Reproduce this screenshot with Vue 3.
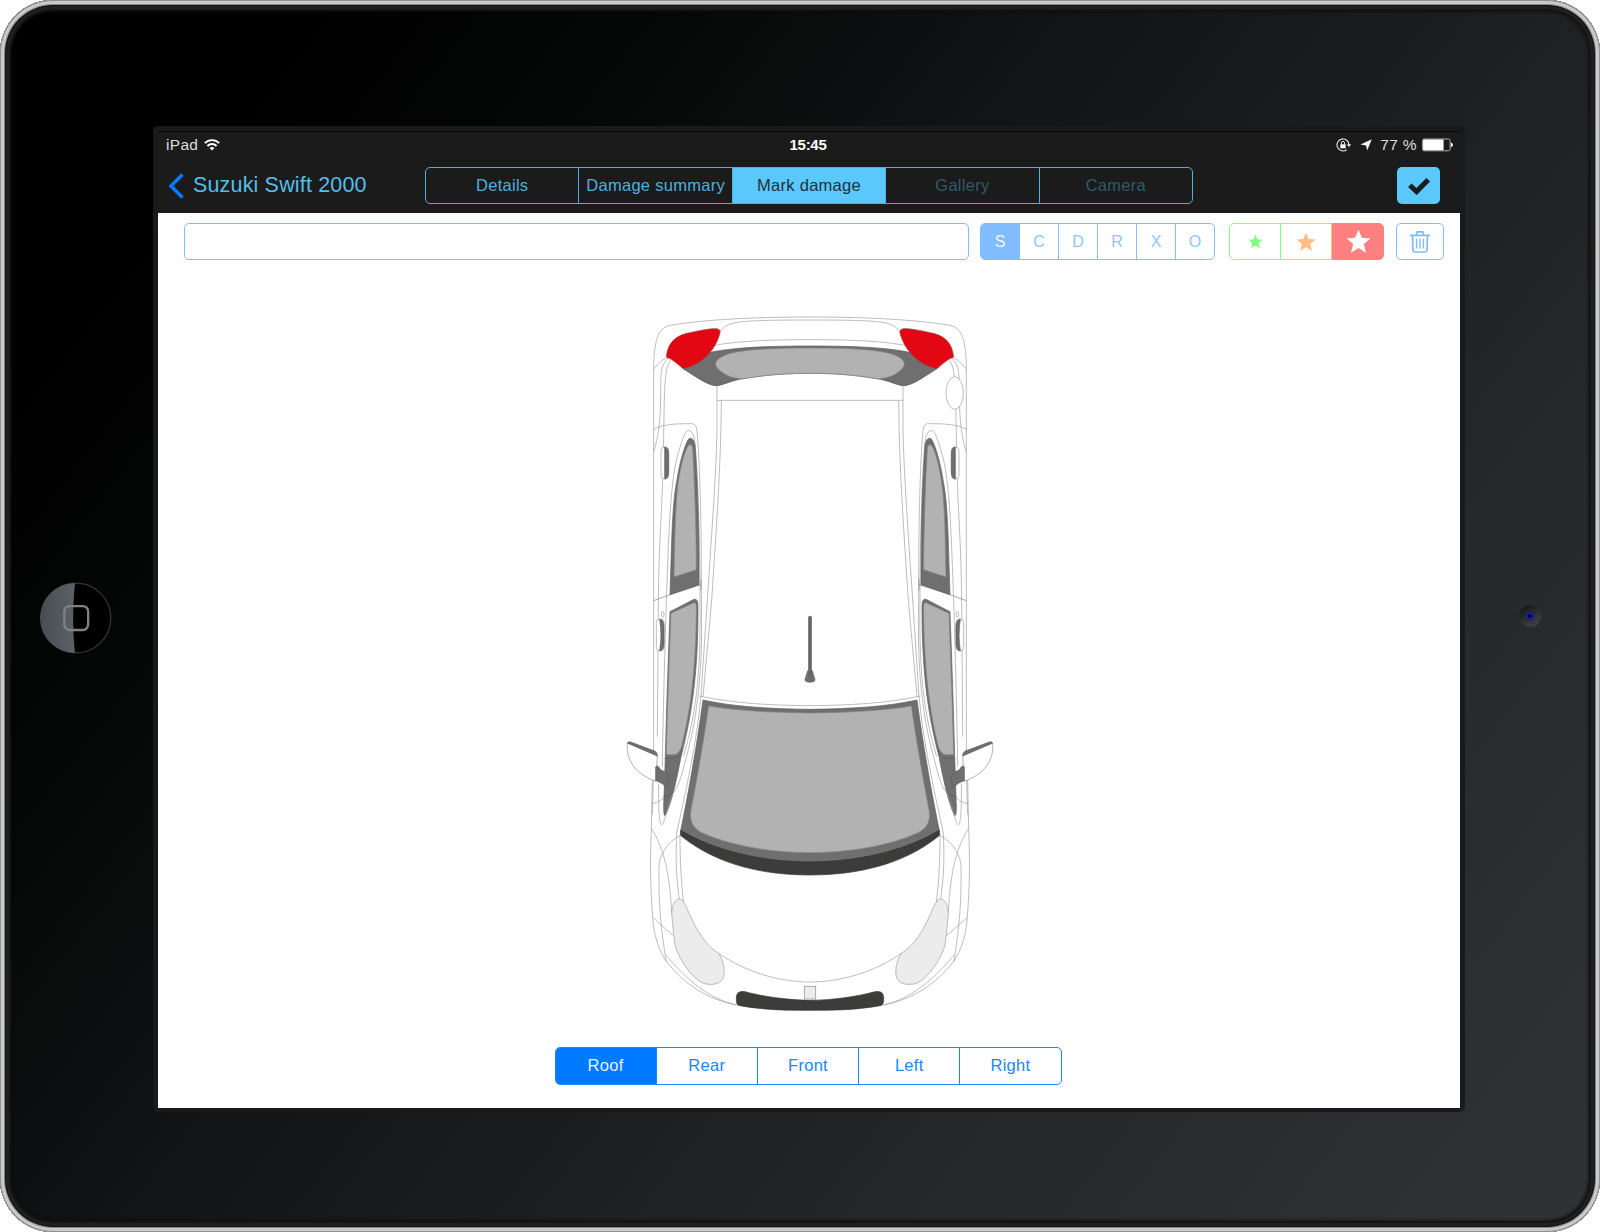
<script setup>
import { ref } from 'vue'

const tabs = [
  { name: 'Details' },
  { name: 'Damage summary' },
  { name: 'Mark damage' },
  { name: 'Gallery', disabled: true },
  { name: 'Camera', disabled: true },
]
const activeTab = ref('Mark damage')

const codes = ['S', 'C', 'D', 'R', 'X', 'O']
const activeCode = ref('S')

const severities = [
  { name: 'low', size: 15 },
  { name: 'medium', size: 20 },
  { name: 'high', size: 25 },
]
const activeSeverity = ref('high')

const views = ['Roof', 'Rear', 'Front', 'Left', 'Right']
const activeView = ref('Roof')

// The car is symmetrical: one half is drawn and then mirrored on x = 570.
const halves = ['', 'translate(1140 0) scale(-1 1)']
</script>

<template>
  <div class="device">
    <div class="bezel-left">
      <svg class="home" width="72" height="72" viewBox="0 0 74 74">
        <defs>
          <linearGradient id="shine" x1="0" y1="0" x2="1" y2="0">
            <stop offset="0" stop-color="#484d52" />
            <stop offset="1" stop-color="#5c6167" />
          </linearGradient>
        </defs>
        <circle cx="37" cy="37" r="35.8" fill="#000" stroke="#333335" stroke-width="1.4" />
        <path d="M36 1A36 36 0 0 0 36 73C33.500 50 33.500 25 36 1Z" fill="url(#shine)" />
        <rect x="25" y="24.800" width="24.500" height="24.500" rx="5.500" fill="none" stroke="#808086" stroke-width="2.400" />
      </svg>
    </div>

    <div class="frame">
      <div class="screen">
        <header class="top">
          <div class="status">
            <div class="status-left">
              <span class="carrier">iPad</span>
              <svg width="16" height="12" viewBox="0 0 16 12" fill="none" stroke="#fff" stroke-width="1.900">
                <path d="M.8 4.200C4.800 .1 11.200 .1 15.200 4.200" />
                <path d="M3.400 7C6 4.400 10 4.400 12.600 7" />
                <path d="M8 11.500L5.500 8.900C7 7.600 9 7.600 10.500 8.900Z" fill="#fff" stroke="none" />
              </svg>
            </div>
            <span class="time">15:45</span>
            <div class="status-right">
              <svg width="16" height="14" viewBox="0 0 16 14" fill="none" stroke="#e8e8e8">
                <path d="M13 7A6 6 0 1 0 10.800 11.600" stroke-width="1.100" />
                <path d="M10.800 6.300H15.200L13 9Z" fill="#e8e8e8" stroke="none" />
                <rect x="4.300" y="6.300" width="5.400" height="4" fill="#fff" stroke="none" />
                <path d="M5.400 6.500V5A1.600 1.600 0 0 1 8.600 5V6.500" stroke-width="1" />
              </svg>
              <svg class="arrow" width="12" height="12" viewBox="0 0 12 12">
                <path d="M11.800 .2L7.200 11.600L6 6.400L.4 5.600Z" fill="#f2f2f2" />
              </svg>
              <span class="percent">77 %</span>
              <svg width="31" height="14" viewBox="0 0 31 14">
                <rect x=".6" y="1" width="27.500" height="11.800" rx="1.500" fill="none" stroke="#b5b5b5" />
                <rect x="1.100" y="1.500" width="20.500" height="10.800" rx="1" fill="#fff" />
                <path d="M29 4.800C31.600 5.500 31.600 8.300 29 9Z" fill="#fff" />
              </svg>
            </div>
          </div>

          <nav class="nav">
            <div class="back">
              <svg width="17" height="26" viewBox="0 0 17 26" fill="none" stroke="#007aff" stroke-width="3.600">
                <path d="M14.500 1.500L3 13L14.500 24.500" />
              </svg>
              <span class="title">Suzuki Swift 2000</span>
            </div>
            <div class="tabs">
              <button
                v-for="tab in tabs"
                :key="tab.name"
                :class="{ active: tab.name === activeTab }"
                :disabled="tab.disabled"
                @click="activeTab = tab.name"
              ><span>{{ tab.name }}</span></button>
            </div>
            <button class="done">
              <svg width="22" height="18" viewBox="0 0 22 18" fill="none" stroke="#1b1b1b" stroke-width="5">
                <path d="M1.800 8.200L8.600 14.600L20.200 2.800" />
              </svg>
            </button>
          </nav>
        </header>

        <div class="toolbar">
          <input class="note" type="text" />
          <div class="codes">
            <button
              v-for="code in codes"
              :key="code"
              :class="{ active: code === activeCode }"
              @click="activeCode = code"
            >{{ code }}</button>
          </div>
          <div class="severity">
            <button
              v-for="s in severities"
              :key="s.name"
              :class="[s.name, { active: s.name === activeSeverity }]"
              @click="activeSeverity = s.name"
            >
              <svg :width="s.size" :height="s.size" viewBox="0 0 24 24" fill="currentColor">
                <path d="M12 .8L15.200 8.500L23.500 9.100L17.100 14.500L19.200 22.700L12 18.200L4.800 22.700L6.900 14.500L.5 9.100L8.800 8.500Z" />
              </svg>
            </button>
          </div>
          <button class="trash">
            <svg width="20" height="23" viewBox="0 0 20 23" fill="none" stroke="#80bdff" stroke-width="1.700">
              <path d="M0 5.300H20M6.300 5L7.200 1.800H12.800L13.700 5" />
              <path d="M2.500 5.500L3 20Q3.200 22 5 22H15Q16.800 22 17 20L17.500 5.500" />
              <path d="M6.600 8.800V18.500M10 8.800V18.500M13.400 8.800V18.500" stroke-width="1.400" />
            </svg>
          </button>
        </div>

        <main class="canvas">
          <svg class="car" width="380" height="720" viewBox="0 0 1140 2160">
            <g v-for="(t, i) in halves" :key="i" :transform="t" class="line">
              <!-- body outline -->
              <path d="M570 51C400 51 250 59 150 76C112 84 102 125 101 205V1300L100 1440L97 1545" />
              <path d="M97 1440L94 1585C90 1680 91 1760 98 1850C100 1900 115 1950 140 1985C190 2050 260 2098 350 2115" />
              <path d="M570 60C480 60 400 61 360 66C325 69 308 82 299 98" />
              <path d="M570 119C450 119 350 123 280 137" />
              <path d="M139 174C125 180 110 195 101 208" />
              <path d="M145 176C122 192 122 220 122 290C121 370 115 410 101 455" />
              <path d="M152 181C131 205 134 280 131 400C129 620 117 700 115 900L112 1310" />
              <path d="M291 257V380C290 500 275 700 262 900L243 1188C230 1330 200 1460 170 1600C166 1690 170 1740 178 1798" />
              <path d="M304 301C303 500 288 700 275 900L249 1190" />
              <path d="M291 301H570" />
              <!-- rear door -->
              <path d="M101 388C130 372 170 371 215 371C232 372 230 385 234 430C242 560 244 700 244 900C250 1150 225 1280 194 1390C180 1450 165 1482 148 1487C130 1490 120 1508 97 1511" />
              <path d="M139 900C145 750 148 600 165 500C175 450 190 410 197 397C203 387 215 390 222 410C232 460 240 700 240 900C244 1150 222 1260 190 1370" />
              <path d="M139 900C133 1100 128 1300 127 1400" />
              <path d="M101 902L150 884L243 854M243 838V870" stroke="#7c7c7c" />
              <path d="M150 884C155 750 155 620 170 545C180 480 195 435 205 418C213 410 222 418 225 435C234 560 237 700 237 854Z" fill="#6f6f6f" class="dark" />
              <path d="M162 831C164 740 165 640 172 570C180 500 195 450 206 436C212 432 217 436 218 445C224 560 229 700 229 809Z" fill="#b2b2b2" class="glass" />
              <!-- front door -->
              <path d="M150 935L222 898C232 896 234 905 234 925C234 1100 220 1230 183 1370C170 1440 152 1520 135 1547C131 1545 131 1530 131 1520L136 1370C140 1200 146 1050 150 935Z" fill="#6f6f6f" class="dark" />
              <path d="M153 940L222 908C229 907 230 915 229 940C227 1100 214 1220 186 1335C180 1356 172 1364 160 1364H139C143 1200 149 1050 153 940Z" fill="#b2b2b2" class="glass" />
              <path d="M134 1374H165C178 1374 183 1366 186 1350M130 1490C140 1487 152 1485 158 1478" class="dark" />
              <path d="M116 1450C115 1530 118 1574 125 1574C132 1574 134 1550 158 1480" />
              <!-- door handles -->
              <rect x="123" y="441" width="23" height="96" rx="11" fill="#fff" />
              <path d="M134 441C143 441 146 452 146 465V513C146 526 143 537 134 537Z" fill="#6f6f6f" class="dark" />
              <rect x="109" y="957" width="23" height="96" rx="11" fill="#fff" />
              <path d="M119 958C128 957 132 968 132 981V1029C132 1042 128 1053 119 1052C124 1020 124 990 119 958Z" fill="#6f6f6f" class="dark" />
              <ellipse cx="128" cy="943" rx="4" ry="9" />
              <!-- wing mirror -->
              <path d="M22 1330C18 1380 45 1422 108 1444L112 1366L27 1328Z" fill="#fff" stroke="#8a8a8a" />
              <path d="M22 1330Q24 1323 32 1326L106 1354Q112 1358 112 1368L26 1331Z" fill="#6f6f6f" class="dark" />
              <path d="M107 1401C112 1394 118 1402 122 1410C140 1415 147 1425 146 1440C145 1455 142 1463 138 1463C130 1450 118 1446 107 1442Z" fill="#6f6f6f" class="dark" />
              <!-- rear window and light -->
              <path d="M570 138C450 138 350 141 270 157L189 206C235 235 265 257 290 257C310 256 330 242 370 236C440 224 500 220 570 220" fill="#6f6f6f" class="dark" />
              <path d="M570 144C450 144 350 149 312 167C282 181 280 195 300 212C320 229 345 236 370 236C440 224 500 220 570 220" fill="#b2b2b2" class="glass" />
              <path d="M139 172C143 125 170 108 200 100C240 91 270 85 290 86C305 88 300 100 296 112C285 145 250 195 189 206C170 190 155 176 139 172Z" fill="#e30613" stroke="#8c4a4a" />
              <!-- windscreen -->
              <path d="M570 1217C450 1216 340 1210 238 1188" />
              <path d="M570 1228C440 1226 340 1220 249 1200C230 1340 205 1480 182 1592C290 1655 430 1686 570 1686" fill="#6f6f6f" class="dark" />
              <path d="M570 1239C460 1238 350 1232 266 1218C250 1330 230 1440 213 1530C207 1565 220 1585 245 1598C340 1640 460 1658 570 1658" fill="#b2b2b2" class="glass" />
              <path d="M570 1686C430 1685 290 1655 182 1591L181 1606C290 1695 430 1725 570 1725" fill="#3c3c3b" stroke="#333" />
              <!-- bonnet and front bumper -->
              <path d="M94 1585C130 1640 150 1720 155 1840" />
              <path d="M181 1606C140 1625 117 1670 117 1700C115 1830 125 1890 138 1985" />
              <path d="M180 1607C180 1690 184 1745 191 1808" />
              <path d="M98 1852L160 1907" />
              <path d="M138 1965C200 2040 270 2098 350 2115" />
              <path d="M155 1840C156 1810 168 1797 178 1797C190 1797 196 1815 210 1845C230 1890 255 1935 296 1960C312 1985 314 2010 312 2025C308 2052 280 2058 250 2050C215 2035 175 1975 165 1935C160 1900 158 1870 155 1840Z" fill="#ececec" />
              <path d="M296 1960C380 2018 480 2046 570 2046" />
              <path d="M570 2101C500 2100 430 2090 375 2075C355 2072 348 2080 349 2100C350 2112 352 2116 360 2117C430 2130 500 2131 570 2131" fill="#3c3c3b" stroke="#333" />
            </g>
            <ellipse cx="1004" cy="279" rx="26" ry="49" class="fuel" />
            <rect x="553" y="2059" width="34" height="38" fill="#ececec" stroke="#9a9a9a" stroke-width="2.500" />
            <path d="M563 1112H577L585 1139C586 1149 554 1149 555 1139Z" fill="#6f6f6f" stroke="#5a5a5a" stroke-width="2" />
            <path d="M570 953V1130" stroke="#666" stroke-width="11" stroke-linecap="round" />
          </svg>

          <div class="views">
            <button
              v-for="view in views"
              :key="view"
              :class="{ active: view === activeView }"
              @click="activeView = view"
            >{{ view }}</button>
          </div>
        </main>
      </div>
    </div>

    <div class="bezel-right"><div class="camera"></div></div>
  </div>
</template>

<style>
body {
  background: #fff;
}
</style>

<style scoped>
.device {
  box-sizing: border-box;
  width: 1600px;
  height: 1232px;
  display: flex;
  border-radius: 53px;
  padding: 0 5px;
  font-family: "Liberation Sans", Arial, sans-serif;
  background: linear-gradient(128deg, #000 12%, #050606 25%, #131415 43%, #27282a 74%, #303134 96%);
  box-shadow:
    inset 0 0 0 1px #919191,
    inset 0 0 0 4px #c9c9c9,
    inset 0 0 0 5px #8a8a8a,
    inset 0 0 0 6px #101010,
    inset 0 0 0 9px #202021,
    inset 0 0 0 11px #141414,
    inset 0 0 3px 12px rgba(10, 10, 10, 0.6);
}
.bezel-left {
  width: 148px;
  display: flex;
  align-items: center;
  justify-content: center;
}
.home {
  margin: 3px 6px 0 0;
}
.bezel-right {
  flex: 1;
  display: flex;
  align-items: center;
  justify-content: center;
}
.camera {
  width: 22px;
  height: 22px;
  border-radius: 50%;
  margin-right: 1px;
  background:
    radial-gradient(circle, #02021c 0 1.500px, #1c22d0 2.500px, #16187a 3.500px, rgba(27, 28, 30, 0) 5px),
    linear-gradient(150deg, #1a1b1c 20%, #2c2e2f 50%, #3d3f41 85%);
}
.frame {
  box-sizing: border-box;
  width: 1312px;
  height: 986px;
  margin-top: 126px;
  padding: 5px 5px 4px;
  border-radius: 5px;
  background: #1a1a1a;
}
.screen {
  display: flex;
  flex-direction: column;
  height: 977px;
  background: #fff;
}
button {
  box-sizing: border-box;
  margin: 0;
  padding: 0;
  border: 0;
  background: none;
  font: inherit;
  letter-spacing: inherit;
  color: inherit;
  display: flex;
  align-items: center;
  justify-content: center;
}
.top {
  box-sizing: border-box;
  height: 82px;
  background: #1b1b1b;
  border-top: 1px solid #060606;
}
.status {
  height: 27px;
  display: grid;
  grid-template-columns: 1fr auto 1fr;
  align-items: center;
  padding: 0 7px 0 8px;
  font-size: 15.500px;
  line-height: 25px;
  color: #dedede;
}
.status-left,
.status-right {
  display: flex;
  align-items: center;
  height: 25px;
  margin-bottom: 2px;
}
.carrier {
  letter-spacing: 0.300px;
  margin-right: 6px;
}
.time {
  font-weight: 700;
  font-size: 15px;
  letter-spacing: -0.300px;
  margin: 0 3px 2px 0;
  color: #fff;
}
.status-right {
  justify-content: flex-end;
}
.arrow {
  margin: 0 8px 0 8px;
}
.percent {
  margin-right: 5px;
  letter-spacing: 0.350px;
}
.nav {
  display: flex;
  align-items: center;
  height: 53px;
}
.back {
  display: flex;
  align-items: center;
  width: 267px;
  padding-left: 10px;
  box-sizing: border-box;
}
.title {
  margin-left: 8px;
  font-size: 21.500px;
  letter-spacing: 0.160px;
  color: #55bdec;
  white-space: nowrap;
}
.tabs {
  box-sizing: border-box;
  width: 768px;
  height: 37px;
  margin-top: -1px;
  display: flex;
  border: 1px solid #4fb0dd;
  border-radius: 5px;
  font-size: 16.500px;
  letter-spacing: 0.280px;
  color: #4fb0dd;
  overflow: hidden;
}
.tabs button {
  flex: 1 1 0;
  white-space: nowrap;
  min-width: 0;
}
.tabs button + button {
  border-left: 1px solid #4fb0dd;
}
.tabs .active {
  background: #5ac8fa;
  color: #1d3039;
}
.tabs button:disabled {
  color: #315a6d;
}
.done {
  width: 43px;
  height: 37px;
  margin-left: 204px;
  border-radius: 5px;
  background: #5ac8fa;
}
.toolbar {
  display: flex;
  height: 37px;
  padding: 10px 16px 0 26px;
  font-size: 16px;
}
.note {
  box-sizing: border-box;
  width: 785px;
  border: 1px solid #80bcff;
  border-radius: 5px;
  outline: none;
  background: #fff;
}
.codes {
  box-sizing: border-box;
  width: 235px;
  margin-left: 11px;
  display: flex;
  border: 1px solid #80bcff;
  border-radius: 5px;
  overflow: hidden;
  color: #8ec5ff;
}
.codes button {
  flex: 1;
}
.codes button + button {
  border-left: 1px solid #80bcff;
}
.codes .active {
  background: #80bcff;
  color: #f2f8ff;
}
.severity {
  width: 155px;
  margin-left: 14px;
  display: flex;
}
.severity button {
  flex: 1;
  border: 1px solid currentColor;
}
.severity .low {
  color: #80ff80;
  border-radius: 5px 0 0 5px;
}
.severity .medium {
  color: #ffbf80;
  border-left: 0;
}
.severity .high {
  color: #ff8080;
  border-radius: 0 5px 5px 0;
}
.severity .high.active {
  background: #ff8080;
  border-color: #ff8080;
  color: #fff;
}
.trash {
  width: 48px;
  margin-left: 12px;
  border: 1px solid #80bcff;
  border-radius: 5px;
}
.canvas {
  display: flex;
  flex-direction: column;
  align-items: center;
  padding-top: 40px;
}
.car {
  display: block;
  margin-left: 2px;
}
.line {
  fill: none;
  stroke: #9c9c9c;
  stroke-width: 2;
}
.dark {
  stroke: #5c5c5c;
}
.glass {
  stroke: #858585;
}
.fuel {
  fill: #fff;
  stroke: #9c9c9c;
  stroke-width: 2;
}
.views {
  box-sizing: border-box;
  width: 507px;
  height: 38px;
  margin: 27px 2px 0 0;
  display: flex;
  border: 1px solid #1a87ff;
  border-radius: 5px;
  overflow: hidden;
  font-size: 16.500px;
  letter-spacing: 0.280px;
  color: #1a87ff;
}
.views button {
  flex: 1;
  padding-bottom: 1px;
}
.views button + button {
  border-left: 1px solid #1a87ff;
}
.views .active {
  background: #007aff;
  color: #e4f1ff;
}
</style>
